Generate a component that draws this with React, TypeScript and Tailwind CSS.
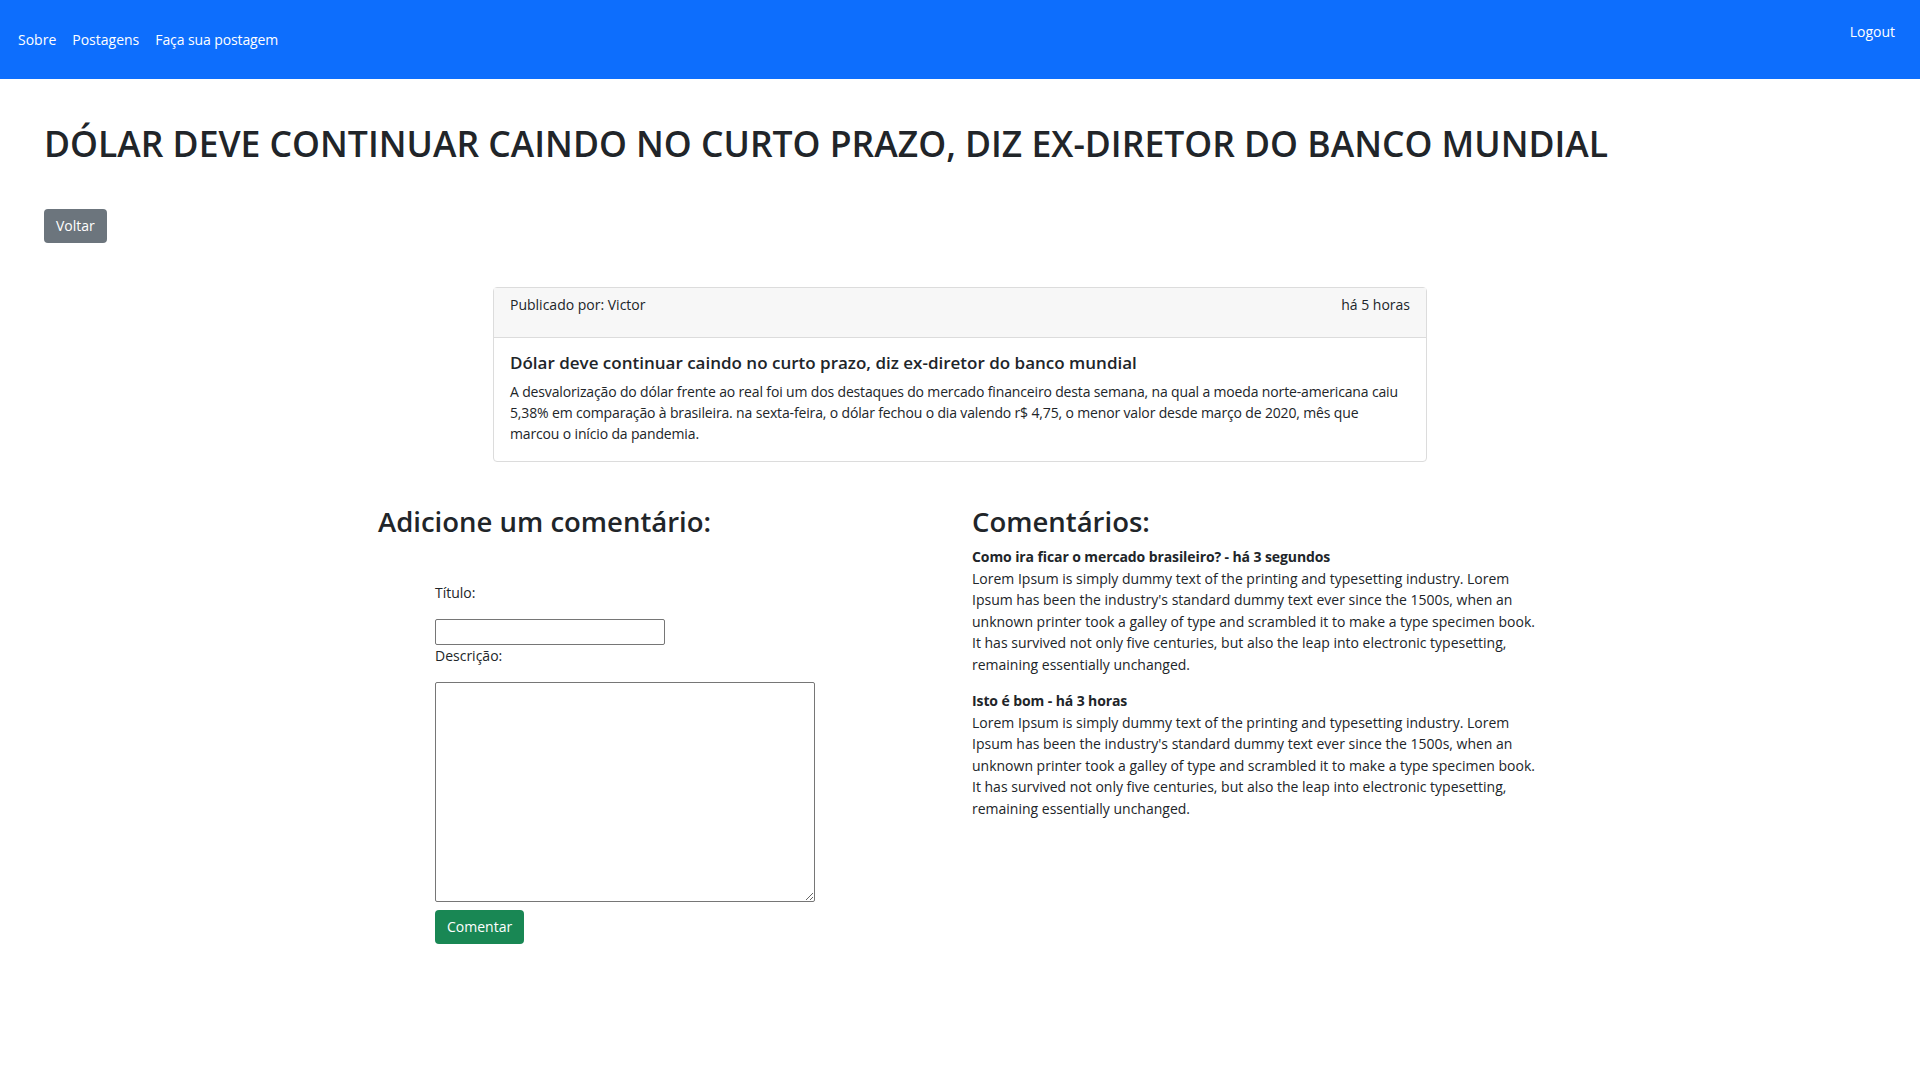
import { useState } from 'react';

const comments = [
  {
    title: 'Como ira ficar o mercado brasileiro? - há 3 segundos',
    body: "Lorem Ipsum is simply dummy text of the printing and typesetting industry. Lorem Ipsum has been the industry's standard dummy text ever since the 1500s, when an unknown printer took a galley of type and scrambled it to make a type specimen book. It has survived not only five centuries, but also the leap into electronic typesetting, remaining essentially unchanged.",
  },
  {
    title: 'Isto é bom - há 3 horas',
    body: "Lorem Ipsum is simply dummy text of the printing and typesetting industry. Lorem Ipsum has been the industry's standard dummy text ever since the 1500s, when an unknown printer took a galley of type and scrambled it to make a type specimen book. It has survived not only five centuries, but also the leap into electronic typesetting, remaining essentially unchanged.",
  },
];

export default function App() {
  const [titulo, setTitulo] = useState('');
  const [descricao, setDescricao] = useState('');

  return (
    <div className="min-h-screen bg-white text-[#212529] font-['Open_Sans',sans-serif]">
      {/* Navbar */}
      <nav className="h-[79px] bg-[#0d6efd] flex justify-between pl-[10px] pr-[25px]">
        <div className="flex items-center pb-[1px] text-sm text-white">
          <a className="px-2 leading-[21px]">Sobre</a>
          <a className="px-2 leading-[21px]">Postagens</a>
          <a className="px-2 leading-[21px] tracking-[-0.1px]">Faça sua postagem</a>
        </div>
        <a className="pt-[21px] text-sm text-white leading-[21px]">Logout</a>
      </nav>

      <div className="px-[44px]">
        <h1 className="mt-[43px] text-[35.5px] leading-[43px] font-semibold">
          DÓLAR DEVE CONTINUAR CAINDO NO CURTO PRAZO, DIZ EX-DIRETOR DO BANCO MUNDIAL
        </h1>
        <button className="mt-[44px] h-[34px] px-3 bg-[#6c757d] text-white text-sm rounded">
          Voltar
        </button>
      </div>

      {/* Post card */}
      <div className="mt-[44px] mx-auto w-[934px] border border-[#dcdcdc] rounded">
        <div className="h-[50px] bg-[#f7f7f7] border-b border-[#dcdcdc] px-4 pt-[6px] flex justify-between text-sm leading-[21px]">
          <span>Publicado por: Victor</span>
          <span>há 5 horas</span>
        </div>
        <div className="px-4 pt-[15px] pb-[17px]">
          <h5 className="text-[17px] leading-[20px] font-semibold mb-[8px]">
            Dólar deve continuar caindo no curto prazo, diz ex-diretor do banco mundial
          </h5>
          <p className="text-sm leading-[21px] tracking-[-0.15px]">
            A desvalorização do dólar frente ao real foi um dos destaques do mercado financeiro desta semana, na qual a moeda norte-americana caiu 5,38% em comparação à brasileira. na sexta-feira, o dólar fechou o dia valendo r$ 4,75, o menor valor desde março de 2020, mês que marcou o início da pandemia.
          </p>
        </div>
      </div>

      {/* Comments area */}
      <div className="mt-[43px] mx-auto w-[1188px] grid grid-cols-2 pb-16">
        <div className="px-3">
          <h2 className="text-[27.5px] leading-[34px] font-semibold">Adicione um comentário:</h2>
          <form className="pl-[57px] pt-[43px] flex flex-col items-start" onSubmit={(e) => e.preventDefault()}>
            <label className="text-sm leading-[21px]">Título:</label>
            <input
              type="text"
              value={titulo}
              onChange={(e) => setTitulo(e.target.value)}
              className="mt-[16px] w-[230px] h-[26px] border border-[#767676] rounded-[2px] px-1 text-sm outline-none"
            />
            <label className="text-sm leading-[21px]">Descrição:</label>
            <textarea
              value={descricao}
              onChange={(e) => setDescricao(e.target.value)}
              className="mt-[16px] w-[380px] h-[220px] border border-[#767676] rounded-[2px] p-1 text-sm outline-none"
            />
            <button type="submit" className="mt-[8px] h-[34px] px-3 bg-[#198754] text-white text-sm rounded">
              Comentar
            </button>
          </form>
        </div>
        <div className="px-3">
          <h2 className="text-[27.5px] leading-[34px] font-semibold">Comentários:</h2>
          <div className="mt-[7px] flex flex-col gap-[15px]">
            {comments.map((c) => (
              <div key={c.title} className="text-sm leading-[21.5px]">
                <div className="font-bold tracking-[-0.1px]">{c.title}</div>
                <p>{c.body}</p>
              </div>
            ))}
          </div>
        </div>
      </div>
    </div>
  );
}
